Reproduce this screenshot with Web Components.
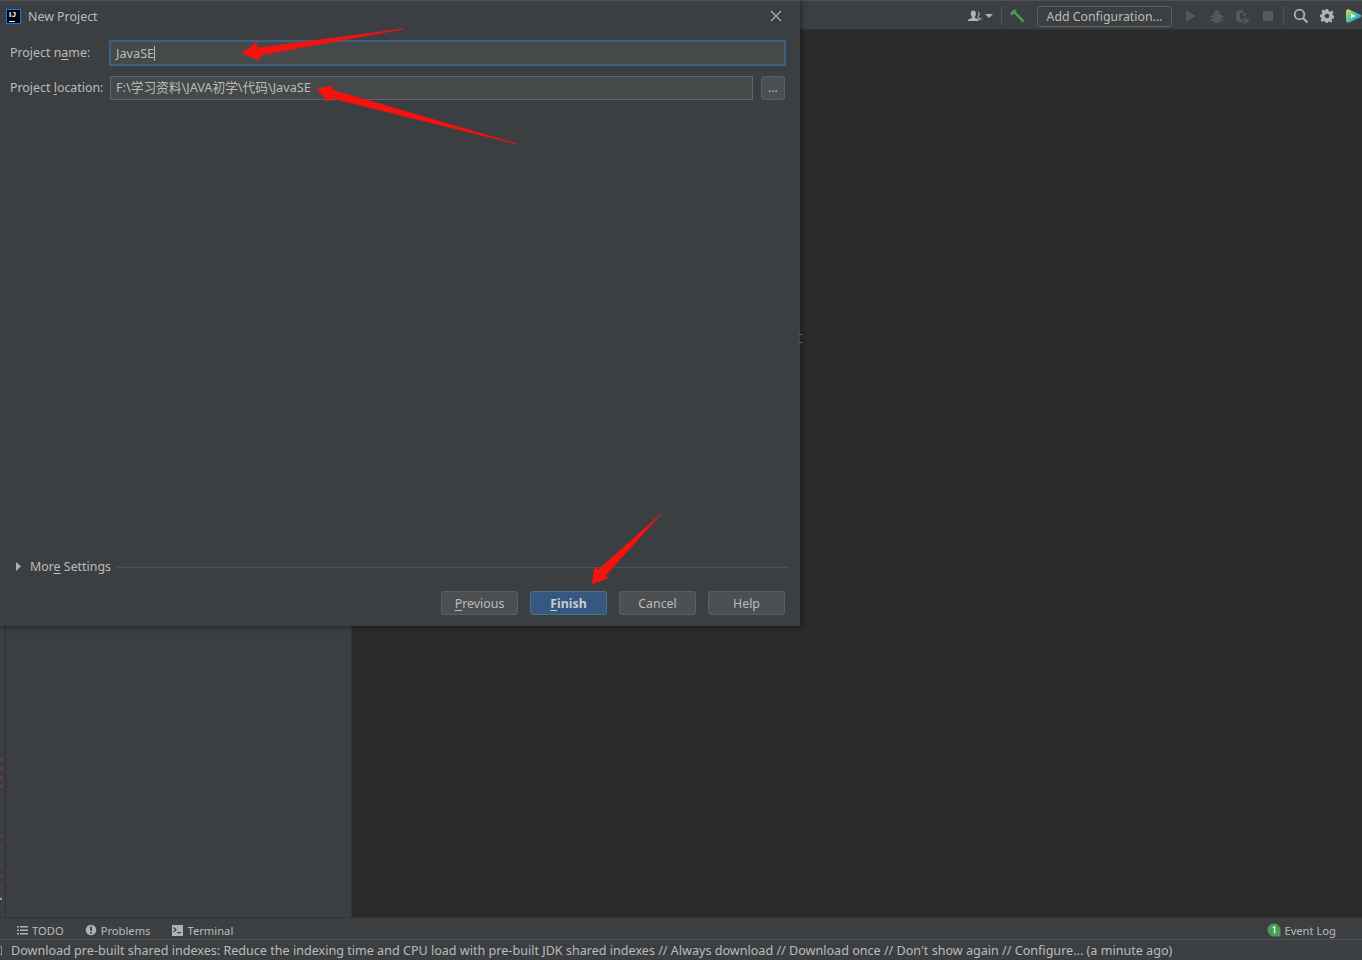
<!DOCTYPE html>
<html>
<head>
<meta charset="utf-8">
<title>New Project</title>
<style>
    html, body { margin: 0; height: 100%; background: #2b2b2b; overflow: hidden; }
    body { font-family: "Noto Sans", "Noto Sans CJK SC", sans-serif; font-size: 12.400px; color: #bbb; }
</style>
</head>
<body>
<ide-frame>
    <ide-toolbar slot="top"></ide-toolbar>
    <ide-toolstrip slot="strip"></ide-toolstrip>
    <ide-status slot="status">Download pre-built shared indexes: Reduce the indexing time and CPU load with pre-built JDK shared indexes // Always download // Download once // Don't show again // Configure... (a minute ago)</ide-status>
    <new-project-dialog slot="over"></new-project-dialog>
    <red-arrows slot="over"></red-arrows>
</ide-frame>

<script>
class IdeFrame extends HTMLElement {
    constructor() {
        super();
        this.attachShadow({ mode: 'open' });
        this.shadowRoot.innerHTML = `
            <style>
                :host { display: flex; flex-direction: column; height: 960px; position: relative; }
                .main { flex: 1; display: flex; min-height: 0; }
                /* error stripes down the left edge */
                .gutter { width: 5px; border-right: 1px solid #323232;
                          background:
                            repeating-linear-gradient(#6e3d40 0 3px, transparent 3px 9px) 0 728px / 2px 34px no-repeat,
                            repeating-linear-gradient(#6e3d40 0 2px, transparent 2px 10px) 0 805px / 2px 62px no-repeat,
                            linear-gradient(#9a9c9e, #9a9c9e) 0 868px / 2px 2px no-repeat,
                            #3c3f41; }
                .side { width: 345px; background: #3c3f41; border-right: 1px solid #323232; }
                .editor { flex: 1; background: #2b2b2b; }
                .grip { position: absolute; left: 799px; width: 3px; height: 1px; background: #5a6e80; }
            </style>
            <slot name="top"></slot>
            <div class="main">
                <div class="gutter"></div>
                <div class="side"></div>
                <div class="editor"></div>
            </div>
            <slot name="strip"></slot>
            <slot name="status"></slot>
            <slot name="over"></slot>
            <div class="grip" style="top:334px"></div>
            <div class="grip" style="top:342px"></div>
        `;
    }
}

class IdeToolbar extends HTMLElement {
    constructor() {
        super();
        this.attachShadow({ mode: 'open' });
        this.shadowRoot.innerHTML = `
            <style>
                :host { display: flex; align-items: center; justify-content: flex-end; height: 30px; box-sizing: border-box;
                        background: #3c3f41; border-top: 1px solid #4e5254; border-bottom: 1px solid #323232; padding: 2px 0 0 800px; }
                svg { display: block; flex: none; }
                .sep { width: 1px; height: 20px; background: #515151; flex: none; }
                .cfg { box-sizing: border-box; height: 21px; width: 135px; flex: none; border: 1px solid #5e6060; border-radius: 3px;
                       text-align: center; line-height: 20px; font-size: 12.300px; color: #bbb; white-space: nowrap; }
            </style>
            <svg width="26" height="16" viewBox="0 0 26 16" style="margin-right:8px"><path d="M6 2.500c2 0 3 1.400 3 3.200 0 1.300-.6 2.300-1.200 3v1.100l4 1.900V13H1v-1.300l4-1.900V8.700C4.400 8 3.800 7 3.800 5.700 3.800 3.900 4.500 2.500 6 2.500z" fill="#afb1b3"/><path d="M10.500 3.200c1.500 0 2.300 1.200 2.300 2.700 0 1-.4 1.900-1 2.500v.9l2.700 1.300V12H12.700l-2.400-1.400V8.700c.7-.8 1-1.800 1-3 0-1-.3-1.800-.8-2.500z" fill="#8f9193"/><path d="M18 6h8l-4 4z" fill="#afb1b3"/></svg>
            <div class="sep"></div>
            <svg width="16" height="16" viewBox="0 0 16 16" style="margin:0 12px 0 7px"><path d="M1 5.500 5 1.500h3L6.500 3.500 15.500 12.500 13.500 14.500 5 5.500 3 7.500z" fill="#499c54"/></svg>
            <div class="cfg">Add Configuration...</div>
            <svg width="14" height="14" viewBox="0 0 14 14" style="margin-left:12px"><path d="M2 1.500 12 7 2 12.500z" fill="#55585a"/></svg>
            <svg width="14" height="16" viewBox="0 0 14 16" style="margin-left:12px"><path d="M3.500 5.500h7l1 1.500v5.500l-2.500 2.500h-4L2.500 12.500V7zM5 2.500h4l1 2.500H4zM0 8h2.500v1.300H0zM11.500 8H14v1.300h-2.500zM0 11.500h2.500v1.300H0zM11.500 11.500H14v1.300h-2.500z" fill="#55585a"/></svg>
            <svg width="16" height="16" viewBox="0 0 16 16" style="margin-left:11px"><path d="M1 4.500 3.500 2H8v3H5v6h3v3H3.500L1 11.500z" fill="#55585a"/><path d="M8 5h3v2l-1 1H8zM9 9.500l6 3.200-6 3.300z" fill="#55585a"/></svg>
            <svg width="12" height="12" viewBox="0 0 12 12" style="margin-left:11px"><rect x="1" y="1" width="10" height="10" fill="#55585a"/></svg>
            <div class="sep" style="margin-left:9px"></div>
            <svg width="16" height="16" viewBox="0 0 16 16" style="margin-left:9px"><circle cx="6.500" cy="6.500" r="4.800" fill="none" stroke="#afb1b3" stroke-width="1.800"/><path d="M10 10l4.500 4.500" stroke="#afb1b3" stroke-width="2.200"/></svg>
            <svg width="14" height="14" viewBox="0 0 14 14" style="margin-left:11px"><path d="M5.800 0h2.400l.4 2 1.500.7L12 1.500 13.500 3.300l-1.200 1.600.5 1.400 1.200.5v2.400l-1.900.5-.6 1.500 1 1.700L11 13.500l-1.700-1-1.300.5-.5 1.400H5.800l-.4-1.700-1.500-.6-1.700 1L.5 11.500l1-1.600L1 8.500l-1-.4V5.800l1.800-.5.6-1.400-1-1.700L3 .5l1.600 1 1-.4z" fill="#afb1b3"/><circle cx="7" cy="7" r="2.300" fill="#3c3f41"/></svg>
            <svg width="17" height="16" viewBox="0 0 17 16" style="margin-left:11px"><defs><linearGradient id="cs" x1="0" y1="0" x2="1" y2="1"><stop offset="0" stop-color="#e8d84a"/><stop offset=".5" stop-color="#3cc7a0"/><stop offset="1" stop-color="#2f7fe0"/></linearGradient></defs><path d="M4 1.500C2 1 1 2 1 4v8c0 2 1 3 3 2.500l11-5c2-1 2-2 0-3z" fill="url(#cs)"/><path d="M6 5.500l5 2.500-5 2.500z" fill="#e8f4ff"/></svg>
        `;
    }
}

class ToolTab extends HTMLElement {
    constructor() {
        super();
        this.attachShadow({ mode: 'open' });
        this.shadowRoot.innerHTML = `
            <style>
                :host { display: flex; align-items: center; gap: 3px; font-size: 11.200px; color: #bbb; white-space: nowrap; }
                ::slotted(svg) { display: block; flex: none; }
            </style>
            <slot name="icon"></slot><slot></slot>
        `;
    }
}

class IdeToolstrip extends HTMLElement {
    constructor() {
        super();
        this.attachShadow({ mode: 'open' });
        this.shadowRoot.innerHTML = `
            <style>
                :host { display: flex; align-items: center; height: 23px; box-sizing: border-box; background: #3c3f41;
                        border-top: 1px solid #323232; border-bottom: 1px solid #515151; padding: 3px 26px 0 16px; }
                .sp { flex: 1; }
            </style>
            <tool-tab style="margin-right:21px">
                <svg slot="icon" width="13" height="13" viewBox="0 0 13 13"><path d="M1 2h2v1.500H1zM4 2h8v1.500H4zM1 5.500h2V7H1zM4 5.500h8V7H4zM1 9h2v1.500H1zM4 9h8v1.500H4z" fill="#afb1b3"/></svg>
                TODO
            </tool-tab>
            <tool-tab style="margin-right:21px">
                <svg slot="icon" width="13" height="13" viewBox="0 0 13 13"><circle cx="6" cy="6" r="5.300" fill="#afb1b3"/><rect x="5.200" y="2.500" width="1.700" height="4.500" fill="#3c3f41"/><rect x="5.200" y="8" width="1.700" height="1.700" fill="#3c3f41"/></svg>
                Problems
            </tool-tab>
            <tool-tab>
                <svg slot="icon" width="13" height="13" viewBox="0 0 13 13"><rect x="1" y="1" width="11" height="11" fill="#afb1b3"/><path d="M2.500 3.500 5 5.700 2.500 8" fill="none" stroke="#3c3f41" stroke-width="1.200"/><rect x="6" y="8" width="4" height="1.200" fill="#3c3f41"/></svg>
                Terminal
            </tool-tab>
            <div class="sp"></div>
            <tool-tab>
                <svg slot="icon" width="14" height="14" viewBox="0 0 14 14"><path d="M7 .5a6.500 6.500 0 1 0 0 13h6.500V7A6.500 6.500 0 0 0 7 .5z" fill="#499c54"/><path d="M5.500 4.200 7.500 3h.8v7.500H6.800V4.800l-1.300.7z" fill="#e8f0e8"/></svg>
                Event Log
            </tool-tab>
        `;
    }
}

class IdeStatus extends HTMLElement {
    constructor() {
        super();
        this.attachShadow({ mode: 'open' });
        this.shadowRoot.innerHTML = `
            <style>
                :host { display: flex; align-items: center; height: 20px; box-sizing: border-box; background: #3c3f41; position: relative;
                        padding: 1px 0 0 11px; font-size: 12.580px; color: #bbb; white-space: nowrap; overflow: hidden; }
                .cut { position: absolute; left: 0; top: 6px; width: 2px; height: 9px; box-sizing: border-box;
                       border: 1px solid #8a8c8e; border-left: 0; }
            </style>
            <div class="cut"></div>
            <slot></slot>
        `;
    }
}

class IdeButton extends HTMLElement {
    constructor() {
        super();
        this.attachShadow({ mode: 'open' });
        this.shadowRoot.innerHTML = `
            <style>
                :host { display: block; box-sizing: border-box; width: 77px; height: 24px; border: 1px solid #5e6060; border-radius: 3px;
                        background: #4c5052; color: #bbb; font-size: 12.400px; line-height: 23px; text-align: center; }
                :host([primary]) { background: #365880; border-color: #4c708c; font-weight: 700; color: #c8ccd0; }
                ::slotted(u) { text-underline-offset: 2px; }
            </style>
            <slot></slot>
        `;
    }
}

class NewProjectDialog extends HTMLElement {
    constructor() {
        super();
        this.attachShadow({ mode: 'open' });
        this.shadowRoot.innerHTML = `
            <style>
                :host { position: absolute; left: 0; top: 0; width: 800px; height: 626px; box-sizing: border-box; display: flex; flex-direction: column;
                        background: #3c3f41; border-top: 1px solid #4e5254; box-shadow: 1px 1px 6px rgba(0,0,0,.45); }
                .title { display: flex; align-items: center; height: 31px; flex: none; padding: 0 18px 0 6px; gap: 7px; }
                .title svg { margin-bottom: 2px; }
                .logo { box-sizing: border-box; width: 15px; height: 15px; background: #000; border: 1px solid #087cfa; position: relative;
                        font: 700 8px/9px "Liberation Sans", sans-serif; color: #fff; padding-left: 2px; letter-spacing: .2px; }
                .logo::after { content: ""; position: absolute; left: 2px; bottom: 1px; width: 6px; height: 1px; background: #fff; }
                .name { flex: 1; }
                .rows { flex: none; padding: 8px 14px 0 10px; display: grid; grid-template-columns: 99px 1fr 25px; row-gap: 10px; align-items: center; }
                .lab { white-space: nowrap; padding-bottom: 2px; }
                u { text-underline-offset: 2px; }
                .field { box-sizing: border-box; height: 24px; border: 1px solid #646464; background: #45494a; padding-left: 5px; line-height: 21px;
                         font-size: 12.700px; color: #bbb; white-space: nowrap; }
                .focus { grid-column: 2 / 4; height: 26px; line-height: 22px; border: 2px solid #3d6185; padding-left: 5px; }
                .caret { display: inline-block; width: 1px; height: 15px; background: #bbb; vertical-align: -3px; }
                .loc { margin: 0 8px 0 1px; }
                .dots { box-sizing: border-box; width: 24px; height: 24px; border: 1px solid #5e6060; border-radius: 3px; background: #4c5052; text-align: center; line-height: 22px; font-size: 12px; }
                .spacer { flex: 1; }
                .more { flex: none; display: flex; align-items: center; padding: 0 12px 1px 16px; height: 20px; }
                .more svg { display: block; margin-right: 9px; }
                .more i { flex: 1; height: 1px; background: #515151; margin: 3px 0 0 6px; }
                .btns { flex: none; display: flex; justify-content: flex-end; gap: 12px; padding: 14px 15px 11px; }
            </style>
            <div class="title">
                <div class="logo">IJ</div>
                <div class="name">New Project</div>
                <svg width="12" height="12" viewBox="0 0 12 12"><path d="M1 1l10 10M11 1 1 11" stroke="#afb1b3" stroke-width="1.100" fill="none"/></svg>
            </div>
            <div class="rows">
                <div class="lab">Project n<u>a</u>me:</div>
                <div class="field focus">JavaSE<span class="caret"></span></div>
                <div class="lab">Project <u>l</u>ocation:</div>
                <div class="field loc">F:\\学习资料\\JAVA初学\\代码\\JavaSE</div>
                <div class="dots">...</div>
            </div>
            <div class="spacer"></div>
            <div class="more">
                <svg width="5" height="9" viewBox="0 0 5 9"><path d="M0 0l5 4.500L0 9z" fill="#afb1b3"/></svg>
                <span>Mor<u>e</u> Settings</span><i></i>
            </div>
            <div class="btns">
                <ide-button><u>P</u>revious</ide-button>
                <ide-button primary><u>F</u>inish</ide-button>
                <ide-button>Cancel</ide-button>
                <ide-button>Help</ide-button>
            </div>
        `;
    }
}

class RedArrows extends HTMLElement {
    constructor() {
        super();
        this.attachShadow({ mode: 'open' });
        this.shadowRoot.innerHTML = `
            <style>
                :host { position: absolute; left: 0; top: 0; width: 800px; height: 626px; pointer-events: none; }
                svg { display: block; }
                path { fill: #f5120f; stroke: #f5120f; stroke-width: .7; stroke-linejoin: round; }
            </style>
            <svg width="800" height="626" viewBox="0 0 800 626">
                <path d="M403 29 261 55 258 60 242 53 256 43 258 48z"/>
                <path d="M517 144 331 98 328 102 317 89 333 86 332 90z"/>
                <path d="M661 514 605 576 608 578 592 584 595 567 598 570z"/>
            </svg>
        `;
    }
}

customElements.define('ide-frame', IdeFrame);
customElements.define('ide-toolbar', IdeToolbar);
customElements.define('tool-tab', ToolTab);
customElements.define('ide-toolstrip', IdeToolstrip);
customElements.define('ide-status', IdeStatus);
customElements.define('ide-button', IdeButton);
customElements.define('new-project-dialog', NewProjectDialog);
customElements.define('red-arrows', RedArrows);
</script>
</body>
</html>
